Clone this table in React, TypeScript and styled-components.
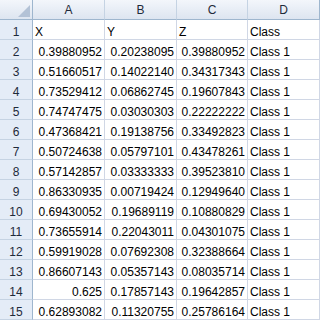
import React from "react";
import styled, { createGlobalStyle } from "styled-components";

const GlobalStyle = createGlobalStyle`
    html, body {
        margin: 0;
        padding: 0;
        background: #ffffff;
    }
`;

const Sheet = styled.div`
    display: grid;
    grid-template-columns: 33px 72px 72px 71px 72px;
    grid-auto-rows: 20px;
    width: 320px;
    font-family: "Liberation Sans", Arial, sans-serif;
    font-size: 12px;
    color: #000000;
    background: #ffffff;
`;

const Corner = styled.div`
    position: relative;
    box-sizing: border-box;
    background: linear-gradient(#f3f6fb, #dde5f0);
    border-right: 1px solid #9eb6ce;
    border-bottom: 1px solid #9eb6ce;

    svg {
        position: absolute;
        right: 2px;
        bottom: 2px;
    }
`;

const ColHeader = styled.div<{ $last?: boolean }>`
    box-sizing: border-box;
    display: flex;
    align-items: center;
    justify-content: center;
    padding-top: 1px;
    background: linear-gradient(#f3f6fb, #dde5f0);
    border-right: 1px solid ${(p) => (p.$last ? "#9eb6ce" : "#c5d3e3")};
    border-bottom: 1px solid #9eb6ce;
    color: #1e2a3a;
    line-height: 14px;
`;

const RowHeader = styled.div`
    box-sizing: border-box;
    display: flex;
    align-items: flex-end;
    justify-content: center;
    background: #e4ecf7;
    border-right: 1px solid #9eb6ce;
    border-bottom: 1px solid #c5d3e3;
    color: #1e2a3a;
    line-height: 14px;
`;

const Cell = styled.div<{ $num?: boolean }>`
    box-sizing: border-box;
    display: flex;
    align-items: flex-end;
    justify-content: ${(p) => (p.$num ? "flex-end" : "flex-start")};
    padding: 0 2px 0 2px;
    border-right: 1px solid #d0d7e5;
    border-bottom: 1px solid #d0d7e5;
    line-height: 14px;
    white-space: nowrap;
    overflow: hidden;
`;

const CornerMark = () => (
    <svg width="12" height="12" viewBox="0 0 12 12">
        <polygon points="12,0 12,12 0,12" fill="#b3c2d6" />
    </svg>
);

const columns = ["A", "B", "C", "D"];

const rows: string[][] = [
    ["X", "Y", "Z", "Class"],
    ["0.39880952", "0.20238095", "0.39880952", "Class 1"],
    ["0.51660517", "0.14022140", "0.34317343", "Class 1"],
    ["0.73529412", "0.06862745", "0.19607843", "Class 1"],
    ["0.74747475", "0.03030303", "0.22222222", "Class 1"],
    ["0.47368421", "0.19138756", "0.33492823", "Class 1"],
    ["0.50724638", "0.05797101", "0.43478261", "Class 1"],
    ["0.57142857", "0.03333333", "0.39523810", "Class 1"],
    ["0.86330935", "0.00719424", "0.12949640", "Class 1"],
    ["0.69430052", "0.19689119", "0.10880829", "Class 1"],
    ["0.73655914", "0.22043011", "0.04301075", "Class 1"],
    ["0.59919028", "0.07692308", "0.32388664", "Class 1"],
    ["0.86607143", "0.05357143", "0.08035714", "Class 1"],
    ["0.625", "0.17857143", "0.19642857", "Class 1"],
    ["0.62893082", "0.11320755", "0.25786164", "Class 1"],
];

const isNumber = (v: string) => /^[0-9.]+$/.test(v);

const App: React.FC = () => {
    return (
        <>
            <GlobalStyle />
            <Sheet>
                <Corner>
                    <CornerMark />
                </Corner>
                {columns.map((c, i) => (
                    <ColHeader key={c} $last={i === columns.length - 1}>
                        {c}
                    </ColHeader>
                ))}

                {rows.map((row, r) => (
                    <React.Fragment key={r}>
                        <RowHeader>{r + 1}</RowHeader>
                        {row.map((value, c) => (
                            <Cell key={c} $num={isNumber(value)}>
                                {value}
                            </Cell>
                        ))}
                    </React.Fragment>
                ))}
            </Sheet>
        </>
    );
};

export default App;
